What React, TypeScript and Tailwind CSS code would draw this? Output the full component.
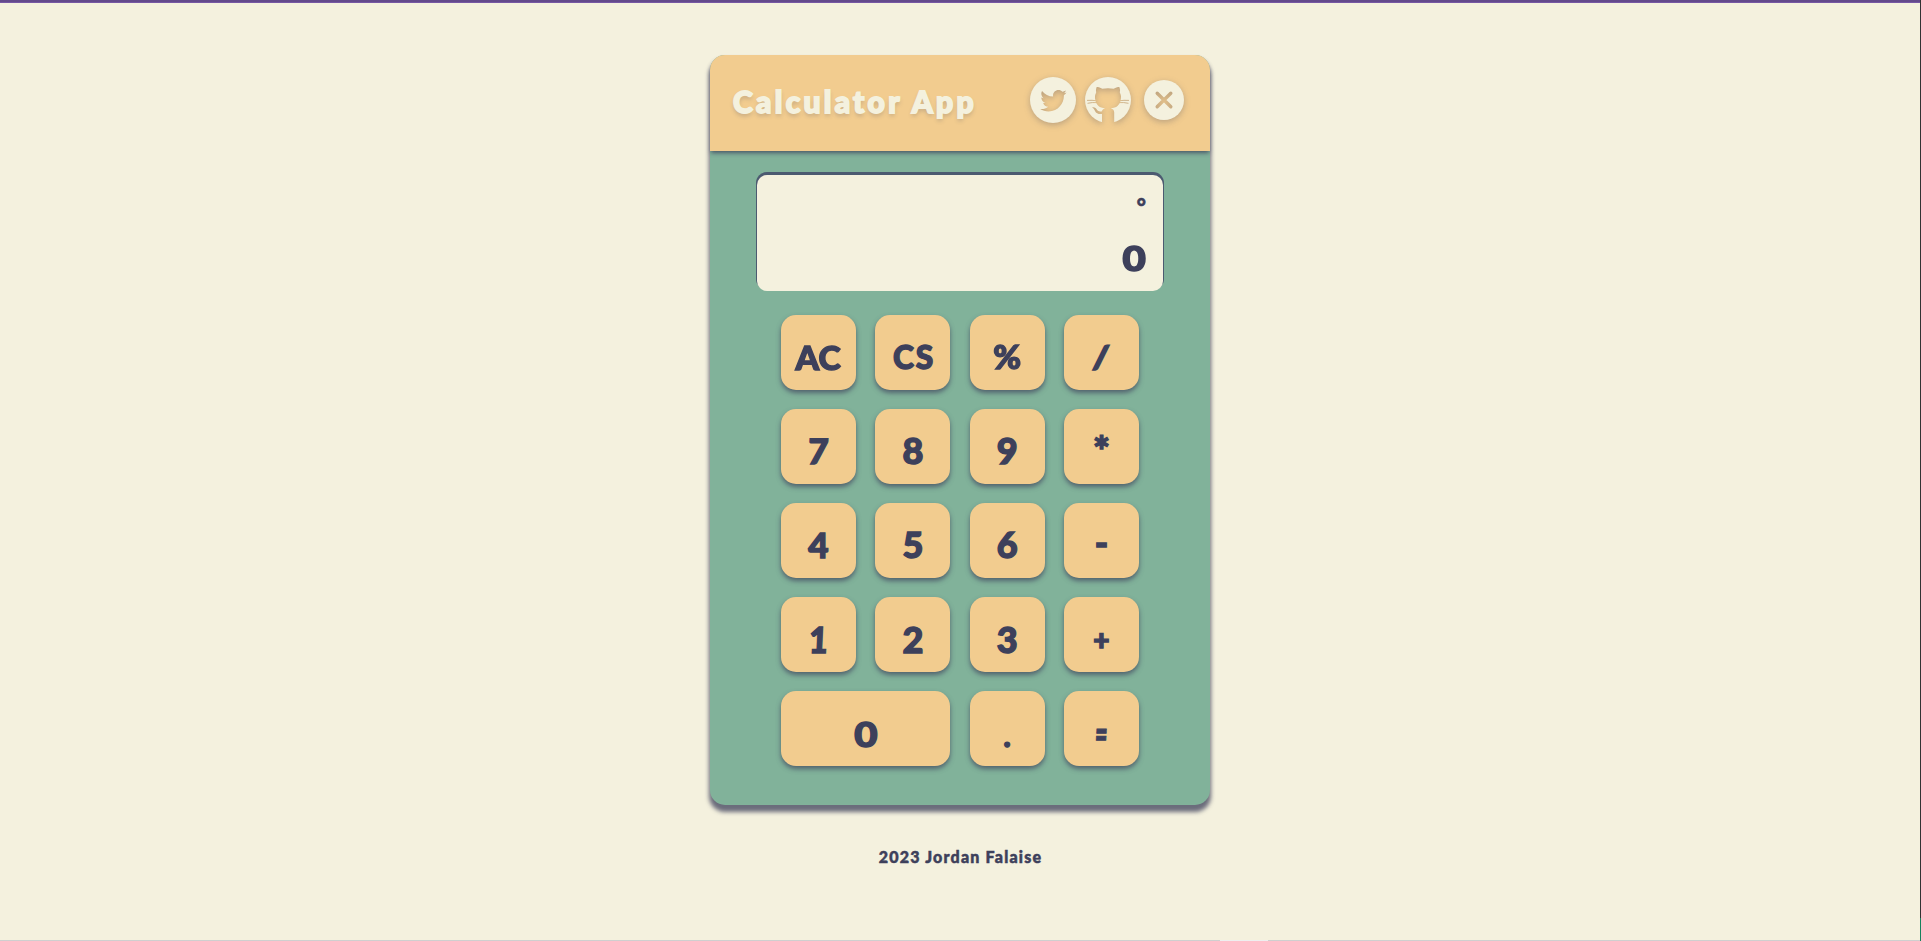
import type { ReactNode } from "react";

type Key = { label: string; wide?: boolean; look?: string };

const digit = "text-[36px] -translate-y-px";
const zero = "text-[34px] translate-y-px scale-x-[1.18]";

const keys: Key[] = [
  { label: "AC", look: "text-[33px] scale-x-[1.02]" },
  { label: "CS", look: "text-[33px] -translate-y-px tracking-[2px] translate-x-px scale-x-[0.96]" },
  { label: "%", look: "text-[32px] scale-x-[1.05]" },
  { label: "/", look: "text-[30px] -translate-y-px -skew-x-6 [-webkit-text-stroke:2.4px_#3d405b]" },
  { label: "7", look: "text-[35px] -translate-y-px -skew-x-3" },
  { label: "8" },
  { label: "9" },
  { label: "*", look: "text-[40px]" },
  { label: "4", look: "text-[35px] -translate-y-px" },
  { label: "5" },
  { label: "6" },
  { label: "-", look: "text-[36px] -translate-y-[3px]" },
  { label: "1", look: "text-[36px] -skew-x-3 scale-x-90" },
  { label: "2", look: "text-[36px]" },
  { label: "3", look: "text-[36px]" },
  { label: "+", look: "text-[28px]" },
  { label: "0", wide: true, look: zero },
  { label: ".", look: "text-[30px] translate-y-[2px]" },
  { label: "=", look: "text-[36px] -skew-x-6 scale-x-[0.6] scale-y-[1.1] [-webkit-text-stroke:1px_#3d405b]" },
];

const shade = "drop-shadow-[0_2px_3px_rgba(61,64,91,0.3)]";

function IconLink({ label, children }: { label: string; children: ReactNode }) {
  return (
    <button aria-label={label} className="block">
      {children}
    </button>
  );
}

function Twitter() {
  return (
    <svg viewBox="0 0 46 46" className={`size-[46px] overflow-visible ${shade}`}>
      <mask id="bird">
        <rect width="46" height="46" fill="white" />
        <path
          transform="translate(10.2 10.5) scale(0.0515)"
          fill="black"
          d="M459.37 151.716c.325 4.548.325 9.097.325 13.645 0 138.72-105.583 298.558-298.558 298.558-59.452 0-114.68-17.219-161.137-47.106 8.447.974 16.568 1.299 25.34 1.299 49.055 0 94.213-16.568 130.274-44.832-46.132-.975-84.792-31.188-98.112-72.772 6.498.974 12.995 1.624 19.818 1.624 9.421 0 18.843-1.3 27.614-3.573-48.081-9.747-84.143-51.98-84.143-102.985v-1.299c13.969 7.797 30.214 12.67 47.431 13.319-28.264-18.843-46.781-51.005-46.781-87.391 0-19.492 5.197-37.36 14.294-52.954 51.655 63.675 129.3 105.258 216.365 109.807-1.624-7.797-2.599-15.918-2.599-24.04 0-57.828 46.782-104.934 104.934-104.934 30.213 0 57.502 12.67 76.67 33.137 23.715-4.548 46.456-13.32 66.599-25.34-7.798 24.366-24.366 44.833-46.132 57.827 21.117-2.273 41.584-8.122 60.426-16.243-14.292 20.791-32.161 39.308-52.628 54.253z"
        />
      </mask>
      <circle cx="23" cy="23" r="23" fill="#f4f1de" mask="url(#bird)" />
    </svg>
  );
}

function Github() {
  return (
    <svg viewBox="0 0 46 46" className={`size-[46px] overflow-visible ${shade}`}>
      <mask id="cat">
        <rect width="46" height="46" fill="white" />
        <path
          fill="black"
          d="M11.5 10.2 C13.6 9.5 15.8 11 17.3 11.8 Q23 10.8 28.7 11.8 C30.2 11 32.4 9.5 34.5 10.2 Q35.5 13 34.8 15.5 C36.3 18 36.3 20.5 35.6 23.2 C34.6 28 31.5 31 25.8 31.2 C28 32 29.2 33.2 29.2 35.5 L29.2 47 L17 47 L17 37 C13.5 37.3 11.2 36.5 10 34 C9.2 32.2 8.4 31.3 7 30.3 C9.8 29.8 11 31 12 32.8 C13 34.4 14.8 34.6 17 34.2 C17.2 32.8 18.2 31.8 20.2 31.2 C14.5 31 11.4 28 10.4 23.2 C9.7 20.5 9.7 18 11.2 15.5 Q10.5 13 11.5 10.2 Z"
        />
        <path
          stroke="black"
          strokeWidth="0.9"
          fill="none"
          d="M2 23.4 Q7 23 12 23.8 M2.5 26.3 Q7.5 25.2 12 25.6 M44 23.4 Q39 23 34 23.8 M43.5 26.3 Q38.5 25.2 34 25.6"
        />
      </mask>
      <circle cx="23" cy="23" r="23" fill="#f4f1de" mask="url(#cat)" />
    </svg>
  );
}

function Close() {
  return (
    <svg viewBox="0 0 40 40" className={`size-10 overflow-visible ${shade}`}>
      <mask id="cross">
        <rect width="40" height="40" fill="white" />
        <path d="M13.2 13.2 L26.8 26.8 M26.8 13.2 L13.2 26.8" stroke="black" strokeWidth="3.4" strokeLinecap="round" />
      </mask>
      <circle cx="20" cy="20" r="20" fill="#f4f1de" mask="url(#cross)" />
    </svg>
  );
}

export default function App() {
  return (
    <div className="flex h-[941px] w-full bg-[#f4f1de] font-['Lato',sans-serif] font-black text-[#3d405b]">
      <div className="flex flex-1 flex-col">
        <div className="h-[3px] shrink-0 border-b border-[#7657a3] bg-[#634a8b]" />
        <div className="flex min-h-0 flex-1 flex-col items-center pt-[52px]">
          <main className="flex h-[750px] w-[500px] shrink-0 flex-col rounded-[15px] bg-[#81b29a] shadow-[0_6px_4px_1px_rgba(61,64,91,0.75)]">
            <header className="flex h-24 shrink-0 items-center justify-between rounded-t-[15px] bg-[#f2cc8f] pr-[26px] pb-[6px] pl-[23px] shadow-[0_3px_4px_-1px_rgba(61,64,91,0.8)]">
              <h1 className="pt-px text-[30px] leading-none tracking-[3.3px] text-[#f4f1de] [-webkit-text-stroke:1.8px_#f4f1de] [text-shadow:0_3px_4px_rgba(61,64,91,0.25)]">
                Calculator App
              </h1>
              <nav className="flex items-center">
                <IconLink label="Twitter"><Twitter /></IconLink>
                <div className="w-[9px]" />
                <IconLink label="GitHub"><Github /></IconLink>
                <div className="w-[13px]" />
                <IconLink label="Close"><Close /></IconLink>
              </nav>
            </header>
            <section className="mx-[47px] mt-6 flex h-[116px] shrink-0 flex-col items-end justify-between rounded-[10px] bg-[#f4f1de] pt-[16px] pr-[17px] pb-[13px] shadow-[0_-2px_0_1px_#4c5a70]">
              <div className="text-[22px] leading-[32px] [-webkit-text-stroke:0.6px_#3d405b]">°</div>
              <div className="origin-right scale-x-[1.18] text-[34px] leading-[40px] [-webkit-text-stroke:1.5px_#3d405b]">0</div>
            </section>
            <div className="mx-auto mt-6 grid w-[358px] grid-cols-[repeat(4,75px)] justify-between gap-y-[19px]">
              {keys.map((k) => (
                <button
                  key={k.label}
                  className={`flex h-[75px] items-center justify-center rounded-[15px] bg-[#f2cc8f] pt-[9px] leading-none shadow-[0_3px_5px_rgba(61,64,91,0.7)] [-webkit-text-stroke:1.4px_#3d405b] ${k.wide ? "col-span-2" : ""}`}
                >
                  <span className={`block leading-none ${k.look ?? digit}`}>{k.label}</span>
                </button>
              ))}
            </div>
          </main>
          <footer className="mt-[42px] pl-px text-[16px] leading-[20px] tracking-[1.2px] [-webkit-text-stroke:0.5px_#3d405b]">2023 Jordan Falaise</footer>
        </div>
        <div className="flex h-px shrink-0 bg-[#cfcfcf] pl-[1220px]">
          <div className="w-12 bg-[#efefef]" />
        </div>
      </div>
      <div className="flex w-px shrink-0 flex-col bg-[#323233]">
        <div className="mt-auto h-[23px] bg-[#16825d]" />
      </div>
    </div>
  );
}
